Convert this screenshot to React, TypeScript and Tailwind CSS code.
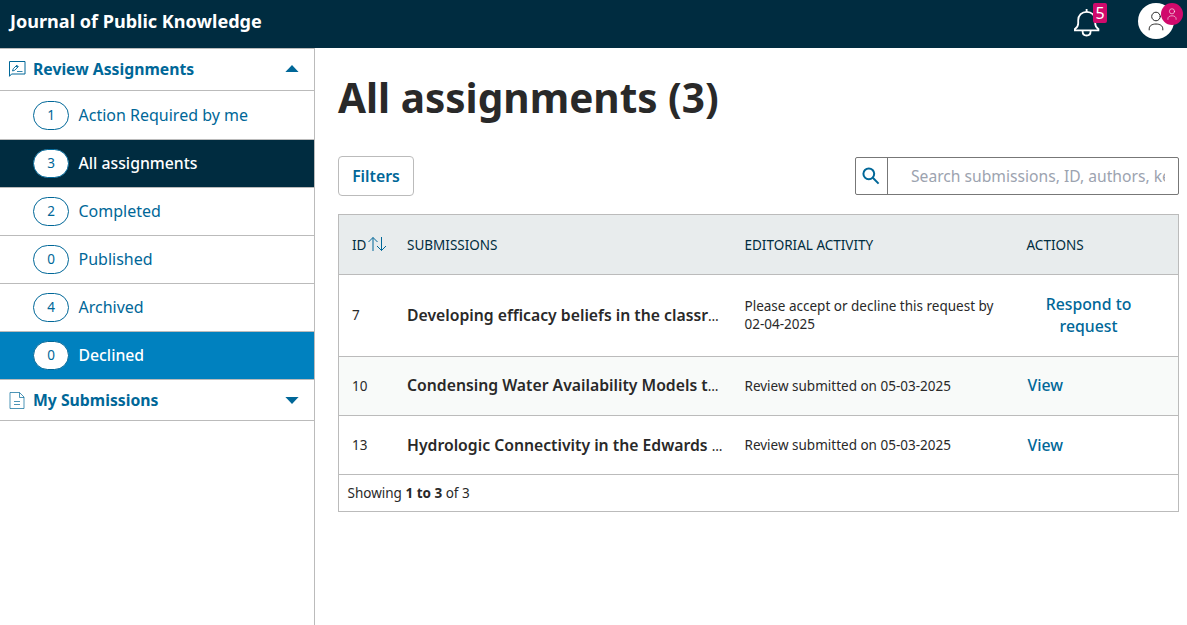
import React from "react";

const navItems = [
  { count: 1, label: "Action Required by me", row: "h-[49px] text-[#006798]", text: "pb-px text-[16px]", badge: "border-[#006798]" },
  { count: 3, label: "All assignments", row: "h-12 bg-[#002c40] text-white", text: "pt-px text-[15.800px] font-medium", badge: "border-[#006798] bg-white" },
  { count: 2, label: "Completed", row: "h-12 text-[#006798]", text: "pb-px text-[16px]", badge: "border-[#006798]" },
  { count: 0, label: "Published", row: "h-12 text-[#006798]", text: "pb-px text-[16px]", badge: "border-[#006798]" },
  { count: 4, label: "Archived", row: "h-12 text-[#006798]", text: "pb-px text-[16px]", badge: "border-[#006798]" },
  { count: 0, label: "Declined", row: "h-12 bg-[#0081bf] text-white", text: "pt-px text-[15.800px] font-medium", badge: "border-[#006798] bg-white" },
];

const rows = [
  {
    id: 7,
    title: "Developing efficacy beliefs in the classr",
    activity: "Please accept or decline this request by 02-04-2025",
    action: "Respond to request",
    row: "h-[82px] bg-white",
    titlePad: "",
    link: "w-[124px] pb-[2px] text-center",
  },
  {
    id: 10,
    title: "Condensing Water Availability Models t",
    activity: "Review submitted on 05-03-2025",
    action: "View",
    row: "h-[59px] bg-[#f8faf9]",
    titlePad: "",
    link: "pb-[2px] pl-px",
  },
  {
    id: 13,
    title: "Hydrologic Connectivity in the Edwards ",
    activity: "Review submitted on 05-03-2025",
    action: "View",
    row: "h-[59px] bg-white",
    titlePad: "pt-px",
    link: "pl-px",
  },
];

function ReviewIcon() {
  return (
    <svg width="18" height="17" viewBox="0 0 18 17" fill="none" stroke="#006798" strokeWidth="1">
      <path d="M1.5 15.300V.5h15.500v12.500H3.500z" />
      <path d="M4.500 10l.7-2.200 3.600-3.600 1.500 1.500-3.600 3.600z" strokeWidth=".9" />
      <path d="M8.200 4.800l1.500 1.500" strokeWidth="1.400" />
      <path d="M9 10.500h5.500" strokeWidth=".8" />
    </svg>
  );
}

function FileIcon() {
  return (
    <svg width="18" height="19" viewBox="0 0 18 19" fill="none" stroke="#006798" strokeWidth=".7">
      <path d="M2 1.500h9.500l4.500 4.500v11.500h-14zM11.500 1.500v5h4.500M6 10.500h6M6 13.500h6" />
    </svg>
  );
}

function Caret({ up }: { up?: boolean }) {
  return (
    <svg className={up ? "mb-px" : ""} width="14" height="7" viewBox="0 0 14 7" fill="#006798">
      <path d={up ? "M0.4 7L7 0l6.600 7z" : "M0.4 0L7 7l6.600-7z"} />
    </svg>
  );
}

function BellIcon() {
  return (
    <svg width="28" height="30" viewBox="0 0 28 30" fill="none" stroke="white" strokeWidth="1.800" strokeLinecap="square" strokeLinejoin="miter">
      <path d="M1.900 22.300h23.500v-1.200c-2.200-1.300-3.200-2.900-3.200-5.800v-3c0-5.200-3.600-8.500-8.500-8.500s-8.500 3.300-8.500 8.500v3c0 2.900-1.100 4.500-3.300 5.800z" />
      <path d="M9.600 23.200c0 2.700 1.600 4.300 4 4.300s4-1.600 4-4.300M13.600 1.800v1.600" />
    </svg>
  );
}

function UserIcon({ className }: { className: string }) {
  return (
    <svg className={className} viewBox="0 0 16 20" fill="none" stroke="currentColor" strokeWidth="1" strokeLinecap="round">
      <circle cx="8" cy="5.500" r="4.300" />
      <path d="M1.200 18.900v-1c0-3.200 2.900-4.900 6.800-4.900s6.800 1.700 6.800 4.900v1" />
    </svg>
  );
}

export default function App() {
  return (
    <div className="flex h-[625px] w-[1187px] flex-col overflow-hidden bg-white font-['Noto_Sans',sans-serif] text-[#292929]">
      <header className="flex h-12 shrink-0 items-start justify-between bg-[#002c40] pr-[13px] pl-[10px]">
        <div className="pt-[9px] text-[18.070px] leading-6 font-bold whitespace-nowrap text-white">Journal of Public Knowledge</div>
        <div className="flex items-start gap-[37px]">
          <div className="relative mt-2 h-[30px] w-7">
            <BellIcon />
            <span className="absolute -top-[5px] left-5 flex h-5 w-[14px] items-center justify-center rounded-[2px] bg-[#d00a6c] text-[16px] leading-5 text-white">5</span>
          </div>
          <div className="relative mt-[3px] flex h-9 w-9 items-center justify-center rounded-full bg-white text-[#292929]">
            <UserIcon className="h-[20px] w-4" />
            <span className="absolute top-0 left-[23px] flex h-[22px] w-[22px] items-center justify-center rounded-full bg-[#d00a6c] pr-px text-white">
              <UserIcon className="h-3 w-[10px]" />
            </span>
          </div>
        </div>
      </header>

      <div className="flex min-h-0 flex-1">
        <nav className="w-[315px] shrink-0 border-t border-r border-[#bbb]">
          <div className="flex h-[42px] items-center border-b border-[#bbb] pr-[15px] pb-px pl-2 text-[#006798]">
            <ReviewIcon />
            <span className="ml-[7px] flex-1 pt-[2px] text-[15.750px] font-bold whitespace-nowrap">Review Assignments</span>
            <Caret up />
          </div>
          {navItems.map((item) => (
            <div key={item.label} className={`flex items-center border-b border-[#bbb] pl-[33px] ${item.row}`}>
              <span className={`flex h-[29px] w-9 items-center justify-center rounded-[14.5px] border text-[13.500px] text-[#006798] ${item.badge}`}>
                {item.count}
              </span>
              <span className={`ml-[9.500px] whitespace-nowrap ${item.text}`}>{item.label}</span>
            </div>
          ))}
          <div className="flex h-[41px] items-center border-b border-[#bbb] pr-[15px] pl-2 text-[#006798]">
            <FileIcon />
            <span className="ml-[7px] flex-1 pt-[2px] text-[15.750px] font-bold whitespace-nowrap">My Submissions</span>
            <Caret />
          </div>
        </nav>

        <main className="flex-1 pt-5 pr-2 pl-[23px]">
          <h1 className="h-[60px] text-[40.500px] leading-[60px] font-bold whitespace-nowrap">All assignments (3)</h1>
          <div className="mt-7 flex items-center justify-between">
            <button className="h-10 w-[76px] rounded-[4px] border border-[#bbb] pt-[2px] text-[15.800px] font-semibold text-[#006798]">Filters</button>
            <div className="flex h-[38px] w-[324px] rounded-[2px] border border-[#777]">
              <div className="flex w-8 items-center justify-center border-r border-[#777] pr-[2px]">
                <svg width="18" height="18" viewBox="0 0 18 18" fill="none" stroke="#006798" strokeWidth="2">
                  <circle cx="6.800" cy="6.800" r="5.400" />
                  <path d="M10.800 10.800l5.800 5.800" />
                </svg>
              </div>
              <input
                className="min-w-0 flex-1 pt-[2px] pr-[13px] pl-[23px] text-[15.650px] outline-none placeholder:text-[#9ca3af]"
                placeholder="Search submissions, ID, authors, keywords, etc."
              />
            </div>
          </div>

          <section className="mt-[18px] border border-[#bbb]">
            <div className="grid h-[60px] grid-cols-[55px_337.500px_282px_1fr] items-center border-b border-[#bbb] bg-[#e8eced] pt-px pl-[13px] text-[13.500px] text-[#002c40]">
              <div className="flex items-center">
                ID
                <svg className="mb-[3px] ml-[2px]" width="19" height="16" viewBox="0 0 19 16" fill="none" stroke="#006798" strokeWidth="1">
                  <path d="M5 15V1.500M.5 6l4.500-4.500L9.500 6M13.500 1v13.500M9 10l4.500 4.500 4.500-4.500" />
                </svg>
              </div>
              <div>SUBMISSIONS</div>
              <div>EDITORIAL ACTIVITY</div>
              <div>ACTIONS</div>
            </div>
            {rows.map((r) => (
              <div key={r.id} className={`grid grid-cols-[55px_337.500px_282px_1fr] items-center border-b border-[#bbb] pl-[13px] text-[13.500px] ${r.row}`}>
                <div>{r.id}</div>
                <div className={`whitespace-pre ${r.titlePad}`}>
                  <span className="text-[15.750px] font-semibold">{r.title}</span>…
                </div>
                <div className="w-[258px] pb-px leading-[18px]">{r.activity}</div>
                <div className={`text-[15.800px] leading-[22px] font-medium text-[#006798] ${r.link}`}>{r.action}</div>
              </div>
            ))}
            <div className="flex h-9 items-center pl-[8.500px] text-[13.500px]">
              <span>
                Showing <b>1 to 3</b> of 3
              </span>
            </div>
          </section>
        </main>
      </div>
    </div>
  );
}
